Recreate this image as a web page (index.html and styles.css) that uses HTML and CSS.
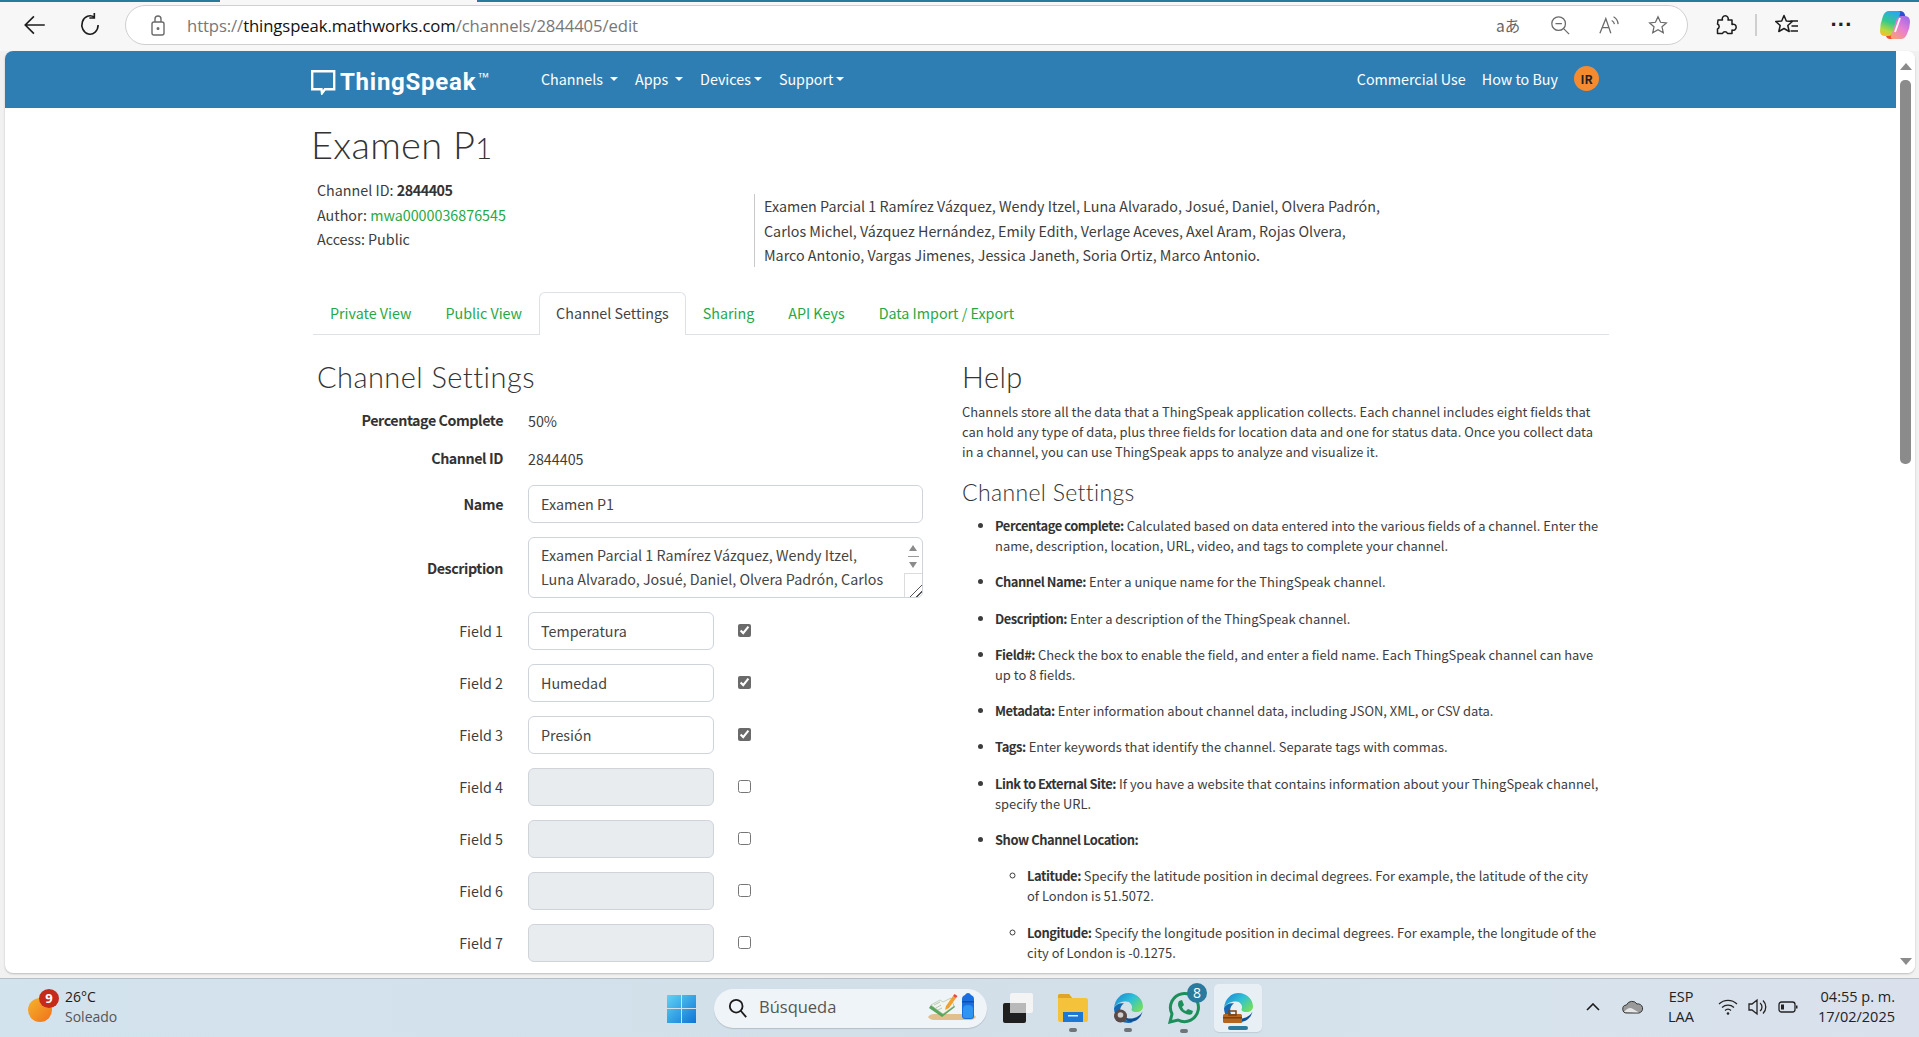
FILE: index.html
```html
<!DOCTYPE html>
<html lang="en">
<head>
<meta charset="utf-8">
<title>Examen P1 - ThingSpeak</title>
<link rel="stylesheet" href="styles.css">
</head>
<body>
<svg class="defs" aria-hidden="true">
  <defs>
    <linearGradient id="edgeG" x1="0" y1="0" x2="1" y2=".7"><stop offset="0" stop-color="#1a7fd0"/><stop offset=".55" stop-color="#2fc0d8"/><stop offset="1" stop-color="#6fdc62"/></linearGradient>
    <symbol id="edge" viewBox="0 0 30 30">
      <path fill="url(#edgeG)" d="M1 15C2 6 8 0 15.500 0C24 0 30 6.500 30 13.500C30 17 27 19 23.500 19C19.500 19 17.500 17.500 19 15C19.500 12 17 8.500 13 8.500C7 8.500 3 11 1 15z"/>
      <path fill="#1668b4" d="M1 15C3 11 7 9.500 11 10.500C7 13 6.500 17 8 21C10 26 15 29 20 29C18.500 29.700 17 30 15.500 30C7 30 1 23 1 15z"/>
      <path fill="#0f4f93" d="M29.500 18.500C28 25 23 29 17 29C13 28 10.500 25 10 21.500C12 25 16.500 26.500 21 25C25 24 28 21.500 29.500 18.500z"/>
    </symbol>
  </defs>
</svg>
<div class="toolbar">
  <div class="tabline"><span class="tabline-a"></span><span class="tabline-b"></span><span class="tabline-c"></span></div>
  <div class="toolbar-row">
    <svg class="ico back" viewBox="0 0 24 24"><path d="M21 12H4M11 4l-8 8 8 8"/></svg>
    <svg class="ico reload" viewBox="0 0 24 24"><path d="M19.5 12a7.5 8.5 0 1 1-3.5-7.2M16 1v4.5h-4.6"/></svg>
    <div class="omnibox">
      <svg class="ico-s lock" viewBox="0 0 18 22"><rect x="3" y="8" width="12" height="13" rx="2"/><path d="M6 8V5a3 3 0 0 1 6 0v3"/><circle cx="9" cy="14.5" r=".8"/></svg>
      <div class="url"><span class="dim">https://</span>thingspeak.mathworks.com<span class="dim">/channels/2844405/edit</span></div>
      <div class="omni-actions">
        <span class="translate">aあ</span>
        <svg class="ico-s" viewBox="0 0 22 22"><circle cx="9.5" cy="9.5" r="7.5"/><path d="M6 9.500h7M15 15l6 6"/></svg>
        <svg class="ico-s" viewBox="0 0 22 22"><path d="M1 20L7.500 4l5.500 16M3.500 14h8M14 6a6 6 0 0 1 3 4M16 2a10 10 0 0 1 5 8"/></svg>
        <svg class="ico-s" viewBox="0 0 22 22"><path d="M11 2l2.800 6 6.400.7-4.800 4.300 1.400 6.500L11 16.200 5.200 19.500l1.400-6.500L1.800 8.700 8.200 8z"/></svg>
      </div>
    </div>
    <div class="tools">
      <svg class="ico tool" viewBox="0 0 24 24"><path d="M5 7h4.500a3 3 0 1 1 5.500 0H19v4.500a3 3 0 1 1 0 5.500v3.500h-4.500a2.700 2.700 0 0 0-5 0H4.500V16a2.700 2.700 0 0 0 0-5z"/></svg>
      <span class="tool-sep"></span>
      <svg class="ico tool" viewBox="0 0 24 24"><path d="M9 2.500l2.300 5.500 6 .5-4.500 4 1.400 6L9 15.500 3.800 18.500l1.400-6-4.500-4 6-.5zM15.500 8H23M16.500 13H23M15.500 18H23"/></svg>
      <span class="dots">···</span>
      <svg class="copilot" viewBox="0 0 30 30">
        <defs>
          <linearGradient id="cpL" x1=".6" y1="0" x2=".3" y2="1"><stop offset="0" stop-color="#2aa8ec"/><stop offset=".45" stop-color="#35c98d"/><stop offset=".8" stop-color="#b8d83f"/><stop offset="1" stop-color="#f5c02a"/></linearGradient>
          <linearGradient id="cpR" x1=".8" y1="0" x2=".2" y2="1"><stop offset="0" stop-color="#a06be8"/><stop offset=".5" stop-color="#e77fd2"/><stop offset="1" stop-color="#f6a07a"/></linearGradient>
        </defs>
        <path fill="#2c4fd6" d="M16 1h4q4 0 5 4l1 4-10 0z"/>
        <path fill="#ef4a2c" d="M8 22h8l-2 7H10q-3 0-4-3z"/>
        <path fill="url(#cpL)" d="M9 1h9q3 0 2 3L15 20q-2 6-7 6H5q-5 0-5-5 0-7 3-15 2-5 6-5z"/>
        <path fill="url(#cpR)" d="M22 6h3q5 0 5 6 0 6-3 12-2 5-6 5h-8q-3 0-2-3l5-15q1-5 6-5z"/>
        <path stroke="#fff" stroke-width="1.800" fill="none" d="M20 8l-5 14"/>
      </svg>
    </div>
  </div>
</div>

<div class="viewport">
  <div class="page">
    <header class="site-head">
      <a class="brand">
        <svg class="brand-mark" viewBox="0 0 25 25"><path d="M1.200 1.200h22v18H14l-3 4-.5-4H1.200z"/></svg>
        <span class="brand-name">ThingSpeak</span><span class="tm">™</span>
      </a>
      <nav class="nav">
        <a class="nav-item caret wide">Channels</a>
        <a class="nav-item caret wide">Apps</a>
        <a class="nav-item caret">Devices</a>
        <a class="nav-item caret">Support</a>
      </nav>
      <div class="nav-right">
        <a class="nav-item">Commercial Use</a>
        <a class="nav-item">How to Buy</a>
        <span class="avatar">IR</span>
      </div>
    </header>

    <main class="container">
      <h1 class="title">Examen P<span class="oldstyle">1</span></h1>
      <div class="meta">
        <div class="meta-left">
          <div>Channel ID: <strong>2844405</strong></div>
          <div>Author: <a class="link">mwa0000036876545</a></div>
          <div>Access: Public</div>
        </div>
        <div class="meta-desc">Examen Parcial 1 Ramírez Vázquez, Wendy Itzel, Luna Alvarado, Josué, Daniel, Olvera Padrón, Carlos Michel, Vázquez Hernández, Emily Edith, Verlage Aceves, Axel Aram, Rojas Olvera, Marco Antonio, Vargas Jimenes, Jessica Janeth, Soria Ortiz, Marco Antonio.</div>
      </div>

      <ul class="tabs">
        <li class="tab"><a class="link">Private View</a></li>
        <li class="tab"><a class="link">Public View</a></li>
        <li class="tab active"><a>Channel Settings</a></li>
        <li class="tab"><a class="link">Sharing</a></li>
        <li class="tab"><a class="link">API Keys</a></li>
        <li class="tab"><a class="link">Data Import / Export</a></li>
      </ul>

      <div class="columns">
        <section class="settings">
          <h2 class="h-big">Channel Settings</h2>
          <div class="row static"><label class="lbl strong">Percentage Complete</label><span>50%</span></div>
          <div class="row static id-row"><label class="lbl strong">Channel ID</label><span>2844405</span></div>
          <div class="row"><label class="lbl strong">Name</label><input class="inp full" value="Examen P1"></div>
          <div class="row"><label class="lbl strong">Description</label>
            <div class="ta-wrap">
              <textarea class="ta" rows="2">Examen Parcial 1 Ramírez Vázquez, Wendy Itzel, Luna Alvarado, Josué, Daniel, Olvera Padrón, Carlos</textarea>
              <div class="ta-bar"><span class="tri up"></span><span class="ta-thumb"></span><span class="tri down"></span><span class="ta-grip"></span></div>
            </div>
          </div>
          <div class="row"><label class="lbl">Field 1</label><input class="inp" value="Temperatura"><input class="chk" type="checkbox" checked></div>
          <div class="row"><label class="lbl">Field 2</label><input class="inp" value="Humedad"><input class="chk" type="checkbox" checked></div>
          <div class="row"><label class="lbl">Field 3</label><input class="inp" value="Presión"><input class="chk" type="checkbox" checked></div>
          <div class="row"><label class="lbl">Field 4</label><input class="inp" disabled><input class="chk" type="checkbox"></div>
          <div class="row"><label class="lbl">Field 5</label><input class="inp" disabled><input class="chk" type="checkbox"></div>
          <div class="row"><label class="lbl">Field 6</label><input class="inp" disabled><input class="chk" type="checkbox"></div>
          <div class="row"><label class="lbl">Field 7</label><input class="inp" disabled><input class="chk" type="checkbox"></div>
        </section>

        <section class="help">
          <h2 class="h-big help-title">Help</h2>
          <p class="help-intro">Channels store all the data that a ThingSpeak application collects. Each channel includes eight fields that can hold any type of data, plus three fields for location data and one for status data. Once you collect data in a channel, you can use ThingSpeak apps to analyze and visualize it.</p>
          <h3 class="h-mid">Channel Settings</h3>
          <ul class="help-list">
            <li><strong>Percentage complete:</strong> Calculated based on data entered into the various fields of a channel. Enter the name, description, location, URL, video, and tags to complete your channel.</li>
            <li><strong>Channel Name:</strong> Enter a unique name for the ThingSpeak channel.</li>
            <li><strong>Description:</strong> Enter a description of the ThingSpeak channel.</li>
            <li><strong>Field#:</strong> Check the box to enable the field, and enter a field name. Each ThingSpeak channel can have up to 8 fields.</li>
            <li><strong>Metadata:</strong> Enter information about channel data, including JSON, XML, or CSV data.</li>
            <li><strong>Tags:</strong> Enter keywords that identify the channel. Separate tags with commas.</li>
            <li><strong>Link to External Site:</strong> If you have a website that contains information about your ThingSpeak channel, specify the URL.</li>
            <li><strong>Show Channel Location:</strong>
              <ul class="help-sub">
                <li><strong>Latitude:</strong> Specify the latitude position in decimal degrees. For example, the latitude of the city of London is 51.5072.</li>
                <li><strong>Longitude:</strong> Specify the longitude position in decimal degrees. For example, the longitude of the city of London is -0.1275.</li>
              </ul>
            </li>
          </ul>
        </section>
      </div>
    </main>
  </div>
  <div class="scrollbar">
    <span class="tri up big"></span>
    <span class="sb-thumb"></span>
    <span class="tri down big sb-down"></span>
  </div>
</div>

<footer class="taskbar">
  <div class="weather">
    <span class="sun"><span class="badge-red">9</span></span>
    <div class="weather-text"><div class="temp">26°C</div><div class="cond">Soleado</div></div>
  </div>
  <div class="tb-center">
    <svg class="win" viewBox="0 0 29 29">
      <defs><linearGradient id="winG" x1="0" y1="0" x2="1" y2="1"><stop offset="0" stop-color="#5fd3f5"/><stop offset="1" stop-color="#0f74d6"/></linearGradient></defs>
      <path fill="url(#winG)" d="M0 1h14v13H0zM15 1h14v13H15zM0 15h14v14H0zM15 15h14v14H15z"/>
    </svg>
    <div class="search">
      <svg class="search-ico" viewBox="0 0 22 22"><circle cx="9" cy="9" r="7"/><path d="M14 14l6 7"/></svg>
      <span class="search-text">Búsqueda</span>
      <svg class="search-art" viewBox="0 0 54 32">
        <path fill="#e2c08d" d="M0 25q2-3 6-3h36q4 0 6 3-2 3-6 3H6q-4 0-6-3z"/>
        <path fill="#5aa65a" d="M1 16l13 9 13-10-2-3L14 21 3 13z"/>
        <path fill="#f2f4ee" stroke="#9fb89c" stroke-width=".6" d="M3 13l9-5 3 2 8-4 3 8-11 8z"/>
        <path stroke="#b7c4b5" fill="none" d="M6 13l6-3M8 16l5-3M10 18l4-2"/>
        <path fill="#f0a02f" d="M18 14l7-10 3 2-7 10-4 2z"/>
        <path fill="#e8483a" d="M25 4l1.500-2 3 2L28 6z"/>
        <path fill="#1a6fe0" d="M34 7q0-3 3-4 1-2 3-2t3 2q3 1 3 4v17q0 3-3 3h-6q-3 0-3-3z"/>
        <path fill="#2f95f0" d="M35 17q0-4 5-4t5 4v7q0 2-2 2h-6q-2 0-2-2z"/>
        <path fill="#0f4fb0" d="M34 9h12v1.500H34z"/>
      </svg>
    </div>
    <svg class="tb-icon" viewBox="0 0 30 30">
      <rect x="0" y="10" width="23" height="20" rx="2" fill="#1f1f1f"/>
      <rect x="7" y="0" width="23" height="20" rx="2" fill="#f4f4f4"/>
      <rect x="7" y="10" width="16" height="10" fill="#b9b9b9"/>
    </svg>
    <div class="tb-app dot">
      <svg class="tb-icon" viewBox="0 0 30 28">
        <path fill="#f5c33b" d="M0 2q0-2 2-2h9l3 4h14q2 0 2 2v20q0 2-2 2H2q-2 0-2-2z"/>
        <path fill="#e0a526" d="M0 2q0-2 2-2h9l3 4H0z"/>
        <path fill="#1b78d4" d="M5 18h20v10H5z"/>
        <path fill="#dbeeff" d="M10 21h10v1.500H10z"/>
      </svg>
    </div>
    <div class="tb-app dot">
      <svg class="tb-icon" viewBox="0 0 30 30">
        <use href="#edge"/>
        <circle cx="7.500" cy="23" r="6.500" fill="#5a4b48"/>
        <circle cx="7.500" cy="22" r="2.800" fill="#d0d0d0"/>
      </svg>
    </div>
    <div class="tb-app dot wa">
      <svg class="tb-icon" viewBox="0 0 32 32">
        <path fill="none" stroke="#1c8f5a" stroke-width="3" d="M2 30l2-8A14 14 0 1 1 10 28z"/>
        <path fill="#1c8f5a" d="M11 9l3-1 2 5-2 2q1 3 4 4l2-2 5 2-1 3q-3 2-8-1-5-3-6-8 0-3 1-4z"/>
      </svg>
      <span class="wa-badge">8</span>
    </div>
    <div class="tile">
      <svg class="tb-icon" viewBox="0 0 30 30">
        <use href="#edge"/>
        <rect x="0" y="21" width="19" height="9" rx="1.500" fill="#b5651d"/>
        <rect x="6" y="18" width="7" height="4" fill="none" stroke="#7a4212" stroke-width="1.500"/>
        <rect x="0" y="24" width="19" height="1.500" fill="#7a4212"/>
      </svg>
    </div>
  </div>
  <div class="tray">
    <svg class="tray-chev" viewBox="0 0 14 8"><path d="M1 7l6-6 6 6"/></svg>
    <svg class="tray-cloud" viewBox="0 0 22 14"><path fill="#9a9a9a" stroke="#333" d="M5 13a4 4 0 0 1-.5-8A6 6 0 0 1 15 4a4.500 4.500 0 0 1 2 9z"/><path fill="#e6e6e6" d="M2 12q5-6 9-3l6 3.500z"/></svg>
    <div class="lang"><div>ESP</div><div>LAA</div></div>
    <svg class="tray-ico" viewBox="0 0 20 18"><path d="M1 6a13 13 0 0 1 18 0M4 9.500a9 9 0 0 1 12 0M7 12.500a4.500 4.500 0 0 1 6 0"/><circle class="fill" cx="10" cy="15.500" r="1.300"/></svg>
    <svg class="tray-ico" viewBox="0 0 20 18"><path d="M1 6h3l5-4v14l-5-4H1zM12 5a5 5 0 0 1 0 8M15 2.500a9 9 0 0 1 0 13"/></svg>
    <svg class="tray-ico" viewBox="0 0 20 14"><rect x="1" y="2" width="16" height="10" rx="2.500"/><rect class="fill" x="3" y="4.500" width="3" height="5"/><path class="fill" d="M18 5.500h1.500v3H18z"/></svg>
    <div class="clock"><div>04:55 p. m.</div><div>17/02/2025</div></div>
  </div>
</footer>
</body>
</html>
```

FILE: styles.css
```css
* { box-sizing: border-box; }
html, body { height: 100%; }
body {
  margin: 0;
  height: 1037px;
  overflow: hidden;
  display: flex;
  flex-direction: column;
  background: #f1f1f1;
  font-family: "Noto Sans CJK JP", "Noto Sans", sans-serif;
  font-size: 14.3px;
  color: #3d3d3d;
}
a { text-decoration: none; }
ul { margin: 0; }
.defs { width: 0; height: 0; display: block; flex: none; }

/* browser toolbar */
.toolbar { height: 51px; flex: none; background: #f7f7f7; }
.tabline { display: flex; height: 2px; }
.tabline-a { width: 220px; background: #2a7a9e; }
.tabline-b { width: 257px; background: #f7f7f7; }
.tabline-c { flex: 1; background: #2a7a9e; }
.toolbar-row { display: flex; align-items: center; height: 43px; padding: 3px 0 0 22px; }
.ico { width: 26px; height: 26px; fill: none; stroke: #1c1c1c; stroke-width: 1.5; flex: none; }
.ico-s { width: 20px; height: 20px; fill: none; stroke: #6a6a6a; stroke-width: 1.4; flex: none; }
.back { margin-right: 29px; }
.reload { margin-right: 22px; }
.omnibox {
  width: 1563px;
  height: 40px;
  display: flex;
  align-items: center;
  background: #fff;
  border: 1.5px solid #cfcfcf;
  border-radius: 20px;
  padding-left: 23px;
}
.lock { height: 22px; width: 18px; margin-right: 20px; }
.lock circle { fill: #6a6a6a; }
.url { font-family: "Open Sans", sans-serif; font-size: 16.7px; color: #111; white-space: nowrap; letter-spacing: -.1px; }
.dim { color: #777; }
.omni-actions { margin-left: auto; display: flex; align-items: center; gap: 29px; padding-right: 19px; }
.translate { font-family: "Noto Sans CJK JP", sans-serif; font-size: 15.5px; color: #666; line-height: 20px; width: 22px; white-space: nowrap; margin-right: 3px; }
.tools { display: flex; align-items: center; padding-left: 25px; }
.tool { width: 24px; height: 26px; stroke-width: 1.5; stroke-linejoin: round; }
.tool-sep { width: 1.5px; height: 22px; background: #cfcfcf; margin: 0 18px; }
.dots { font-size: 22px; font-weight: 700; line-height: 20px; color: #222; width: 24px; text-align: center; margin-left: 31px; font-family: "Liberation Sans", sans-serif; }
.copilot { width: 30px; height: 30px; margin-left: 26px; flex: none; }

/* viewport */
.viewport { flex: none; height: 922px; margin: 0 4px 0 5px; display: flex; background: #fff; border-radius: 8px; overflow: hidden; box-shadow: 0 1px 2px #bbb; }
.page { flex: 1; min-width: 0; overflow: hidden; }
.scrollbar { width: 19px; flex: none; background: #fff; display: flex; flex-direction: column; align-items: center; padding-top: 12px; }
.sb-thumb { width: 11px; height: 384px; background: #8b8b8b; border-radius: 5px; margin: 10px 0 auto; }
.sb-down { margin-bottom: 8px; }
.tri { display: block; width: 0; height: 0; border-left: 6px solid transparent; border-right: 6px solid transparent; }
.tri.up { border-bottom: 7px solid #8b8b8b; }
.tri.down { border-top: 7px solid #8b8b8b; }

/* site header */
.site-head { height: 57px; background: #2f7eb3; display: flex; align-items: center; padding: 0 297px 0 306px; color: #fff; }
.brand { display: flex; align-items: flex-start; width: 230px; flex: none; color: #fff; padding-top: 4px; }
.brand-mark { width: 25px; height: 25px; fill: none; stroke: #fff; stroke-width: 2.4; margin-top: 4px; flex: none; }
.brand-name { font-family: "Roboto", sans-serif; font-weight: 700; font-size: 24px; line-height: 32px; margin-left: 4px; letter-spacing: .75px; }
.tm { font-size: 12px; line-height: 14px; margin: 4px 0 0 1px; font-family: "Liberation Sans", sans-serif; }
.nav { display: flex; padding-bottom: 2px; }
.nav-item { color: #fff; font-size: 14.3px; line-height: 20px; white-space: nowrap; }
.caret { display: flex; align-items: center; margin-right: 17px; }
.caret::after { content: ""; border-left: 4px solid transparent; border-right: 4px solid transparent; border-top: 4.500px solid #fff; margin-left: 3px; }
.caret.wide::after { margin-left: 7px; }
.nav-right { margin-left: auto; display: flex; align-items: center; gap: 16px; padding-bottom: 2px; }
.avatar { width: 25px; height: 25px; border-radius: 50%; background: #f58a2f; color: #222; font-size: 12px; font-weight: 700; display: flex; align-items: center; justify-content: center; }

/* container */
.container { margin-left: 308px; width: 1296px; }
.title { font-family: "Lato", sans-serif; font-weight: 300; font-size: 38px; line-height: 44px; margin: 0 0 0 -2px; padding-top: 14px; height: 72px; color: #333; letter-spacing: .3px; }
.oldstyle { font-size: 29px; }
.meta { display: flex; }
.meta-left { width: 441px; padding-left: 4px; line-height: 24.500px; white-space: nowrap; margin-top: -2px; }
.meta-desc { margin-top: 14px; border-left: 1px solid #c9c9c9; padding-left: 9px; width: 632px; line-height: 24.500px; height: 73px; }
.link { color: #27a844; }
strong { font-weight: 700; color: #333; letter-spacing: -.45px; }

.tabs { list-style: none; padding: 0; margin: 25px 0 0; display: flex; border-bottom: 1px solid #dee2e6; height: 43px; }
.tab { padding: 0 16px; line-height: 40px; border: 1px solid transparent; border-bottom: 0; }
.tab.active { background: #fff; border-color: #dee2e6; border-radius: 6px 6px 0 0; height: 43px; color: #444; }

.columns { display: grid; grid-template-columns: 649px 1fr; padding-top: 23px; }
.h-big { font-family: "Lato", sans-serif; font-weight: 300; font-size: 29px; line-height: 38px; margin: 0 0 12px; padding-left: 4px; color: #333; letter-spacing: .45px; }
.row { display: flex; align-items: center; margin-bottom: 14px; }
.row.static { height: 24px; margin-bottom: 14px; }
.row.id-row { margin-bottom: 15px; }
.lbl { width: 190px; flex: none; text-align: right; margin-right: 25px; padding-bottom: 1px; }
.lbl.strong { font-weight: 700; color: #333; letter-spacing: -.45px; }
.inp { width: 186px; height: 38px; border: 1px solid #ced4da; border-radius: 6px; padding: 0 12px 2px; font: inherit; color: #444; background: #fff; flex: none; }
.inp:disabled { background: #e9ecef; }
.inp.full { width: 395px; }
.chk { width: 13px; height: 13px; margin: 0 0 1px 24px; accent-color: #6a6a6a; }
.ta-wrap { position: relative; width: 395px; height: 61px; flex: none; }
.ta { display: block; width: 100%; height: 61px; resize: none; overflow: hidden; border: 1px solid #ced4da; border-radius: 6px; padding: 5px 35px 0 12px; font: inherit; line-height: 24px; color: #444; }
.ta-bar { position: absolute; top: 4px; right: 1px; bottom: 1px; width: 18px; display: flex; flex-direction: column; align-items: center; }
.ta-bar .tri { border-left-width: 4px; border-right-width: 4px; }
.ta-bar .tri.up { border-bottom-width: 6px; margin-top: 4px; }
.ta-bar .tri.down { border-top-width: 6px; }
.ta-thumb { width: 11px; height: 1px; background: #9a9a9a; margin: 5px 0; }
.ta-grip { margin-top: 5px; width: 18px; flex: 1; border: 1px solid #dcdcdc; border-width: 1px 0 0 1px; background: linear-gradient(135deg, transparent 68%, #555 68%, #555 72%, transparent 72%, transparent 84%, #555 84%, #555 88%, transparent 88%); }

.help-title { padding-left: 0; margin-bottom: 6px; }
.help-intro { margin: 0; font-size: 12.930px; line-height: 20px; width: 640px; }
.h-mid { font-family: "Lato", sans-serif; font-weight: 300; font-size: 23px; line-height: 30px; margin: 15px 0 9px; color: #333; letter-spacing: .35px; }
.help-list { padding-left: 33px; font-size: 12.930px; line-height: 20.200px; width: 640px; }
.help-list li { margin-bottom: 16px; }
.help-sub { padding-left: 32px; margin-top: 16px; list-style: circle; }

/* taskbar */
.taskbar { margin-top: auto; height: 59px; flex: none; border-top: 1px solid #b6c0c8; background: linear-gradient(90deg, #d3e3ee, #d2dfe9 50%, #d6e3ec 75%, #dae1ec); display: grid; grid-template-columns: 667px auto 1fr; align-items: center; }
.weather { display: flex; align-items: center; padding: 0 0 2px 28px; }
.sun { position: relative; width: 24px; height: 24px; border-radius: 50%; background: linear-gradient(135deg, #f5b52b, #f0701c); margin-top: 6px; }
.badge-red { position: absolute; left: 11px; top: -9px; width: 20px; height: 19px; border-radius: 50%; background: #c42b1c; color: #fff; font: 700 13px/19px "Open Sans", sans-serif; text-align: center; }
.weather-text { margin-left: 13px; font: 14px/20px "Open Sans", sans-serif; color: #1b1b1b; }
.cond { color: #555; }
.tb-center { display: flex; align-items: center; }
.win { width: 29px; height: 29px; margin-right: 18px; flex: none; }
.search { width: 273px; height: 39px; border-radius: 20px; background: #eff4f8; box-shadow: 0 1px 1px #b4bec6; display: flex; align-items: center; padding-left: 14px; margin-right: 16px; }
.search-ico { width: 20px; height: 22px; fill: none; stroke: #1b1b1b; stroke-width: 2; }
.search-text { font: 16.500px "Open Sans", sans-serif; color: #555; margin-left: 11px; padding-bottom: 3px; }
.search-art { width: 54px; height: 32px; margin-left: auto; margin-right: 5px; }
.tb-icon { width: 30px; height: 30px; display: block; flex: none; }
.tb-center > .tb-icon { margin-right: 25px; }
.tb-app { position: relative; margin-right: 25px; }
.tb-app.wa { width: 32px; margin-right: 14px; }
.wa .tb-icon { width: 32px; height: 32px; }
.dot::after { content: ""; position: absolute; left: 50%; bottom: -9px; width: 8px; height: 4px; margin-left: -4px; border-radius: 2px; background: #6f7478; }
.wa-badge { position: absolute; right: -7px; top: -9px; width: 20px; height: 20px; border-radius: 50%; background: #2a7a9e; color: #fff; font: 14px/20px "Open Sans", sans-serif; text-align: center; }
.tile { position: relative; width: 48px; height: 48px; border-radius: 5px; background: #e8f0f6; box-shadow: 0 1px 1px #c1ccd4; display: flex; align-items: center; justify-content: center; }
.tile::after { content: ""; position: absolute; left: 14px; bottom: 2px; width: 20px; height: 4px; border-radius: 2px; background: #2a7a9e; }
.tray { display: flex; align-items: center; justify-content: flex-end; padding: 0 24px 2px 0; font: 14.500px/20px "Open Sans", sans-serif; color: #222; }
.tray-chev { width: 14px; height: 8px; fill: none; stroke: #1b1b1b; stroke-width: 1.6; margin-right: 22px; }
.tray-cloud { width: 22px; height: 14px; margin-right: 22px; }
.lang { width: 30px; text-align: center; margin-right: 22px; white-space: nowrap; display: flex; flex-direction: column; align-items: center; }
.tray-ico { width: 20px; height: 18px; fill: none; stroke: #222; stroke-width: 1.3; margin-right: 10px; }
.tray-ico .fill { fill: #222; stroke: none; }
.clock { width: 77px; margin-left: 10px; text-align: right; white-space: nowrap; }
```
